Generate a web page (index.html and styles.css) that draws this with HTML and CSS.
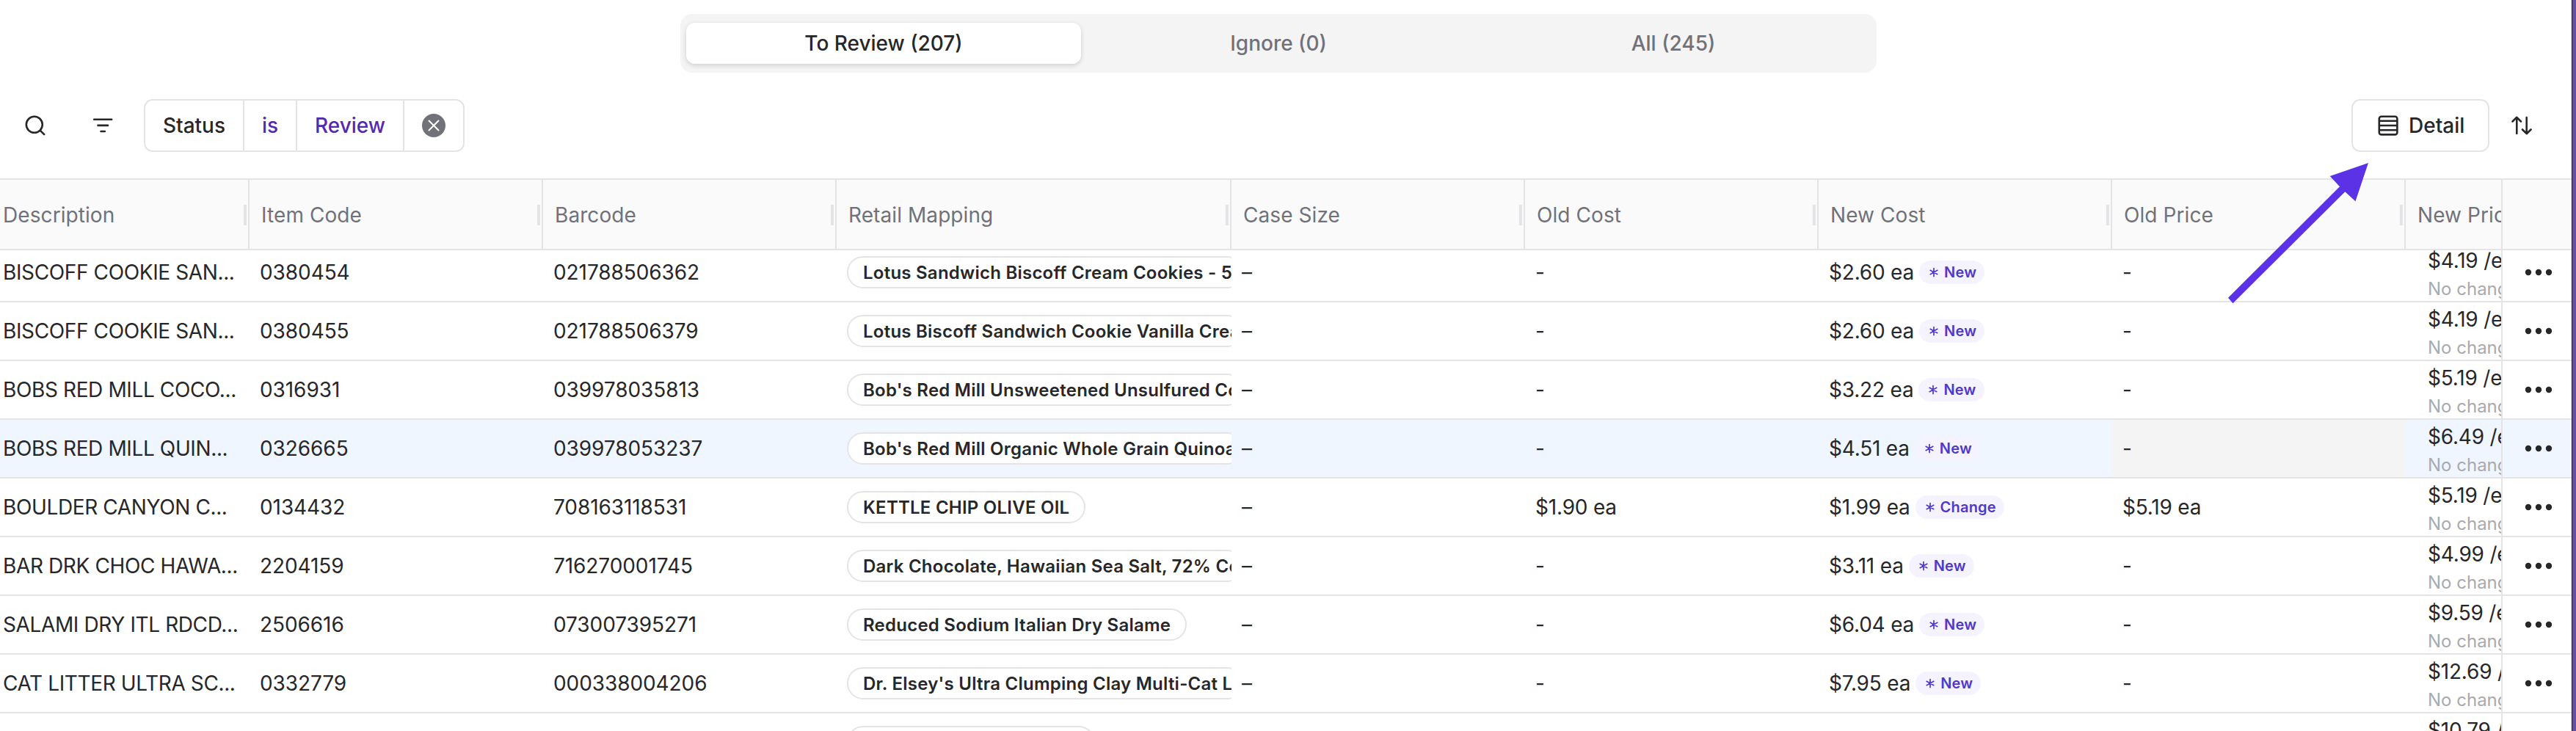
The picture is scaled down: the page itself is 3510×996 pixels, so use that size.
FILE: index.html
```html
<!DOCTYPE html>
<html lang="en">
<head>
<meta charset="utf-8">
<title>Review items</title>
<link rel="stylesheet" href="styles.css">
</head>
<body>
<main class="page">
  <nav class="tabs">
    <button class="tab tab-active">To Review (207)</button>
    <button class="tab">Ignore (0)</button>
    <button class="tab">All (245)</button>
  </nav>
  <section class="toolbar">
    <svg class="icon-search" width="32" height="32" viewBox="0 0 32 32" fill="none" stroke="#27272a" stroke-width="2.6" stroke-linecap="round"><circle cx="14.8" cy="14.8" r="11"/><path d="M22.8 22.8l5.4 5.4"/></svg>
    <svg class="icon-filter" width="32" height="32" viewBox="0 0 32 32" fill="none" stroke="#27272a" stroke-width="2.6" stroke-linecap="round"><path d="M4.2 7.8h24M9.5 15.900h13.500M13.500 24h5.400"/></svg>
    <div class="filter">
      <span class="filter-part part-field">Status</span>
      <span class="filter-part part-op">is</span>
      <span class="filter-part part-value">Review</span>
      <span class="filter-part part-clear"><svg width="32" height="32" viewBox="0 0 32 32"><circle cx="16" cy="16" r="16" fill="#71717a"/><path d="M9.5 9.5l13 13M22.5 9.5l-13 13" stroke="#fff" stroke-width="2" stroke-linecap="round"/></svg></span>
    </div>
    <button class="detail"><svg width="28" height="28" viewBox="0 0 28 28" fill="none" stroke="#27272a" stroke-width="2.6"><rect x="1.8" y="1.8" width="24.6" height="24.6" rx="3"/><path d="M1.8 7.8h24.6M1.8 14h24.6M1.8 20.2h24.6"/></svg>Detail</button>
    <svg class="icon-sort" width="28" height="26" viewBox="0 0 28 26" fill="none" stroke="#27272a" stroke-width="2.6" stroke-linecap="round" stroke-linejoin="round"><path d="M7.3 24V2M1.5 7.5L7.3 1.8L13 7.5M20.7 2v22M15 18.5l5.7 5.7l5.8-5.7"/></svg>
  </section>
  <section class="table">
    <div class="grid head">
      <div class="th th-first">Description</div><div class="th">Item Code</div><div class="th">Barcode</div><div class="th">Retail Mapping</div><div class="th">Case Size</div><div class="th">Old Cost</div><div class="th">New Cost</div><div class="th">Old Price</div><div class="th th-last">New Price</div><div class="th-menu"></div>
    </div>
    <div class="viewport"><div class="rows" id="rows"></div></div>
  </section>
</main>
<svg class="pointer" width="200" height="200" viewBox="0 0 200 200" fill="#5b32e6"><path d="M192 2L139.7 20L153 34.3L1 185.700L7.500 193.300L160.300 41.300L174.500 54.300Z"/></svg>
<script src="rows.js"></script>
</body>
</html>
```
FILE: rows.js
```js
const items = [
  ["BISCOFF COOKIE SAN...", "0380454", "021788506362", "Lotus Sandwich Biscoff Cream Cookies - 5", "-", "$2.60 ea", "New", "-", "$4.19"],
  ["BISCOFF COOKIE SAN...", "0380455", "021788506379", "Lotus Biscoff Sandwich Cookie Vanilla Crea", "-", "$2.60 ea", "New", "-", "$4.19"],
  ["BOBS RED MILL COCO...", "0316931", "039978035813", "Bob's Red Mill Unsweetened Unsulfured Co", "-", "$3.22 ea", "New", "-", "$5.19"],
  ["BOBS RED MILL QUIN...", "0326665", "039978053237", "Bob's Red Mill Organic Whole Grain Quinoa", "-", "$4.51 ea", "New", "-", "$6.49"],
  ["BOULDER CANYON C...", "0134432", "708163118531", "KETTLE CHIP OLIVE OIL", "$1.90 ea", "$1.99 ea", "Change", "$5.19 ea", "$5.19"],
  ["BAR DRK CHOC HAWA...", "2204159", "716270001745", "Dark Chocolate, Hawaiian Sea Salt, 72% Co", "-", "$3.11 ea", "New", "-", "$4.99"],
  ["SALAMI DRY ITL RDCD...", "2506616", "073007395271", "Reduced Sodium Italian Dry Salame", "-", "$6.04 ea", "New", "-", "$9.59"],
  ["CAT LITTER ULTRA SC...", "0332779", "000338004206", "Dr. Elsey's Ultra Clumping Clay Multi-Cat L", "-", "$7.95 ea", "New", "-", "$12.69"],
  ["", "", "", "", "", "", "", "", "$10.79"]
];
const star = '<svg width="12" height="14" viewBox="0 0 12 14" stroke="#5038c8" stroke-width="1.7" stroke-linecap="round"><path d="M6 1.5v11M1.2 4.3l9.6 5.4M10.8 4.3l-9.6 5.4"/></svg>';
const dots = '<svg width="38" height="10" viewBox="0 0 38 10" fill="#27272a"><circle cx="5" cy="5" r="4.2"/><circle cx="19" cy="5" r="4.2"/><circle cx="33" cy="5" r="4.2"/></svg>';
const open = ["KETTLE CHIP OLIVE OIL", "Reduced Sodium Italian Dry Salame", ""];
document.getElementById("rows").innerHTML = items.map((r, i) => `
  <div class="grid row${i === 3 ? " row-hover" : ""}">
    <div class="td td-first">${r[0]}</div><div class="td td-code">${r[1]}</div><div class="td td-code">${r[2]}</div>
    <div class="td"><span class="pill${open.includes(r[3]) ? "" : " pill-cut"}${r[3] ? "" : " pill-empty"}">${r[3]}</span></div>
    <div class="td">${r[0] ? "–" : ""}</div><div class="td td-cost">${r[4]}</div>
    <div class="td td-cost">${r[5]}${r[6] ? `<span class="badge">${star}${r[6]}</span>` : ""}</div>
    <div class="td td-cost td-old">${r[7]}</div>
    <div class="td td-price"><span>${r[8]} /ea</span><small>No change</small></div>
    <div class="td-menu">${dots}</div>
  </div>`).join("");
```
FILE: styles.css
```css
* { box-sizing: border-box; }
body { margin: 0; background: #fff; color: #27272a; font-family: Inter, "Liberation Sans", sans-serif; font-size: 28px; line-height: 40px; }
button { font: inherit; color: inherit; border: 0; background: none; padding: 0; }
.page { width: 3510px; height: 996px; overflow: hidden; border-right: 5px solid #644fa5; box-shadow: inset -1px 0 #1a1033; display: flex; flex-direction: column; padding: 19px 1px 0 0; }
.tabs { display: flex; width: 1630px; height: 80px; margin-left: 927px; padding: 12px 8px; background: #f4f4f5; border-radius: 16px; font-weight: 500; color: #71717a; flex: none; }
.tab { flex: 1; border-radius: 12px; }
.tab-active { background: #fff; color: #27272a; box-shadow: 0 2px 6px rgba(0,0,0,.16); }
.toolbar { display: flex; align-items: center; height: 72px; margin-top: 36px; font-weight: 500; flex: none; }
.icon-search { margin-left: 32px; }
.icon-filter { margin-left: 60px; }
.filter { display: flex; width: 437px; height: 72px; margin-left: 40px; border: 2px solid #e4e4e7; border-radius: 12px; }
.filter-part { display: flex; align-items: center; justify-content: center; border-right: 2px solid #e4e4e7; }
.part-field { width: 135px; }
.part-op { width: 72px; color: #5429b0; }
.part-value { width: 146px; color: #5429b0; }
.part-clear { flex: 1; border: 0; }
.detail { display: flex; align-items: center; gap: 14px; width: 188px; height: 72px; padding-left: 34px; margin-left: auto; border: 2px solid #e4e4e7; border-radius: 12px; }
.icon-sort { margin: 0 54px 0 30px; }
.table { margin-top: 36px; flex: none; }
.grid { display: grid; grid-template-columns: 340px 400px 400px 538px 400px 400px 400px 400px 130px 96px; }
.head { height: 98px; background: #fafafa; border: solid #e4e4e7; border-width: 2px 0; color: #71717a; letter-spacing: .08px; }
.th { display: flex; align-items: center; padding: 2px 0 0 16px; border-right: 2px solid #e4e4e7; overflow: hidden; white-space: nowrap; }
.th::after { content: ""; width: 4px; height: 28px; margin: -1px 2px 0 auto; background: #e4e4e7; flex: none; }
.th.th-first, .td.td-first { padding-left: 4px; }
.td-first { letter-spacing: -.38px; }
.td-code { letter-spacing: -.08px; }
.td-cost { letter-spacing: -.2px; }
.th-last { border-right: 0; }
.th-last::after { display: none; }
.th-menu { border-left: 2px solid #e4e4e7; }
.viewport { height: 655px; overflow: hidden; display: flex; align-items: flex-start; }
.rows { margin-top: -9px; }
.row { height: 80px; border-bottom: 2px solid #e4e4e7; }
.row-hover { background: #eff6ff; }
.row-hover .td-old { background: #f4f4f5; }
.td { display: flex; align-items: center; padding: 0 0 0 14px; overflow: hidden; white-space: nowrap; }
.pill { height: 44px; line-height: 41px; padding: 0 20px; border: 2px solid #e4e4e7; border-radius: 22px; background: #fff; font-size: 24px; font-weight: 600; letter-spacing: .24px; flex: none; }
.pill-cut { width: 540px; }
.pill-empty { width: 338px; }
.badge { display: flex; align-items: center; gap: 8px; height: 32px; padding: 0 11px 0 14px; margin-left: 7px; border-radius: 16px; background: #f5f3ff; color: #5038c8; font-size: 20px; font-weight: 600; letter-spacing: .2px; }
.td-price { flex-direction: column; align-items: flex-start; padding: 3px 0 0 30px; line-height: 40px; letter-spacing: -.2px; }
.td-price small { font-size: 24px; line-height: 32px; margin-top: 3px; color: #a9a9b0; letter-spacing: 0; }
.td-menu { display: flex; align-items: center; justify-content: center; border-left: 2px solid #e4e4e7; padding-left: 4px; }
.pointer { position: absolute; left: 3035px; top: 220px; }
```
